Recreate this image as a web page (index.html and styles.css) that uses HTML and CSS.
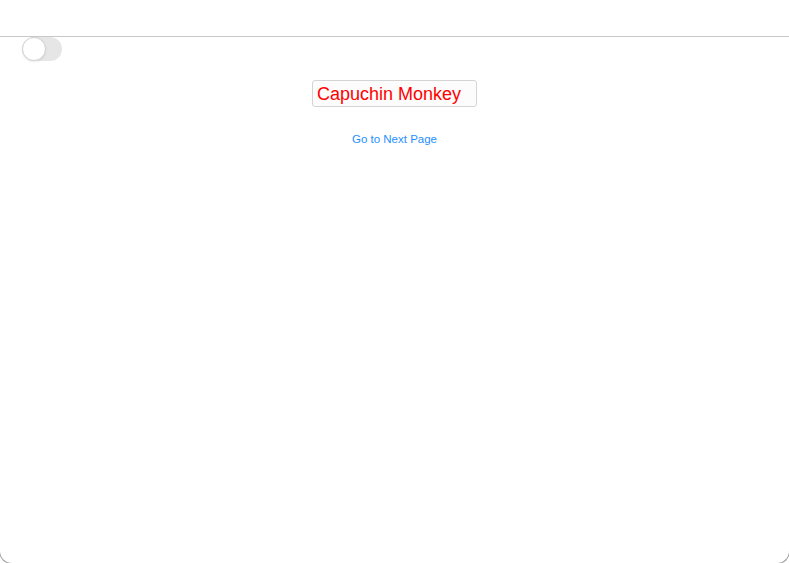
FILE: index.html
```html
<!DOCTYPE html>
<html>
<head>
<meta charset="utf-8">
<link rel="stylesheet" href="styles.css">
</head>
<body>
<div class="frame">
  <div class="topbar"></div>
  <div class="toggle-row">
    <div class="toggle"><div class="knob"></div></div>
  </div>
  <div class="center">
    <div class="field">Capuchin Monkey</div>
    <a class="link" href="#">Go to Next Page</a>
  </div>
</div>
</body>
</html>
```

FILE: styles.css
```css
html, body {
  margin: 0;
  padding: 0;
  background: #fff;
  overflow: hidden;
}
.frame {
  margin: 0 -1px;
  height: 564px;
  border: 1px solid #9a9a9a;
  border-top: none;
  border-radius: 0 0 13px 13px;
  box-sizing: border-box;
  font-family: "Liberation Sans", Arial, sans-serif;
}
.topbar {
  height: 36px;
  border-bottom: 1px solid #c8c8c8;
}
.toggle-row {
  padding-left: 22px;
}
.toggle {
  width: 40px;
  height: 24px;
  border-radius: 12px;
  background: #e6e6e7;
  box-sizing: border-box;
  display: flex;
  align-items: center;
}
.knob {
  width: 24px;
  height: 24px;
  border-radius: 50%;
  background: #fff;
  border: 1px solid #d2d2d2;
  box-sizing: border-box;
  box-shadow: 0 1px 2px rgba(0,0,0,0.08);
}
.center {
  display: flex;
  flex-direction: column;
  align-items: center;
  padding-top: 19px;
}
.field {
  width: 165px;
  height: 27px;
  box-sizing: border-box;
  border: 1px solid #d4d4d4;
  border-radius: 3px;
  background: #fcfcfc;
  color: #ff0000;
  font-size: 18px;
  line-height: 27px;
  padding-left: 4px;
  white-space: nowrap;
}
.link {
  margin-top: 25px;
  color: #1f8fff;
  font-size: 11.5px;
  text-decoration: none;
  line-height: 14px;
}
```
